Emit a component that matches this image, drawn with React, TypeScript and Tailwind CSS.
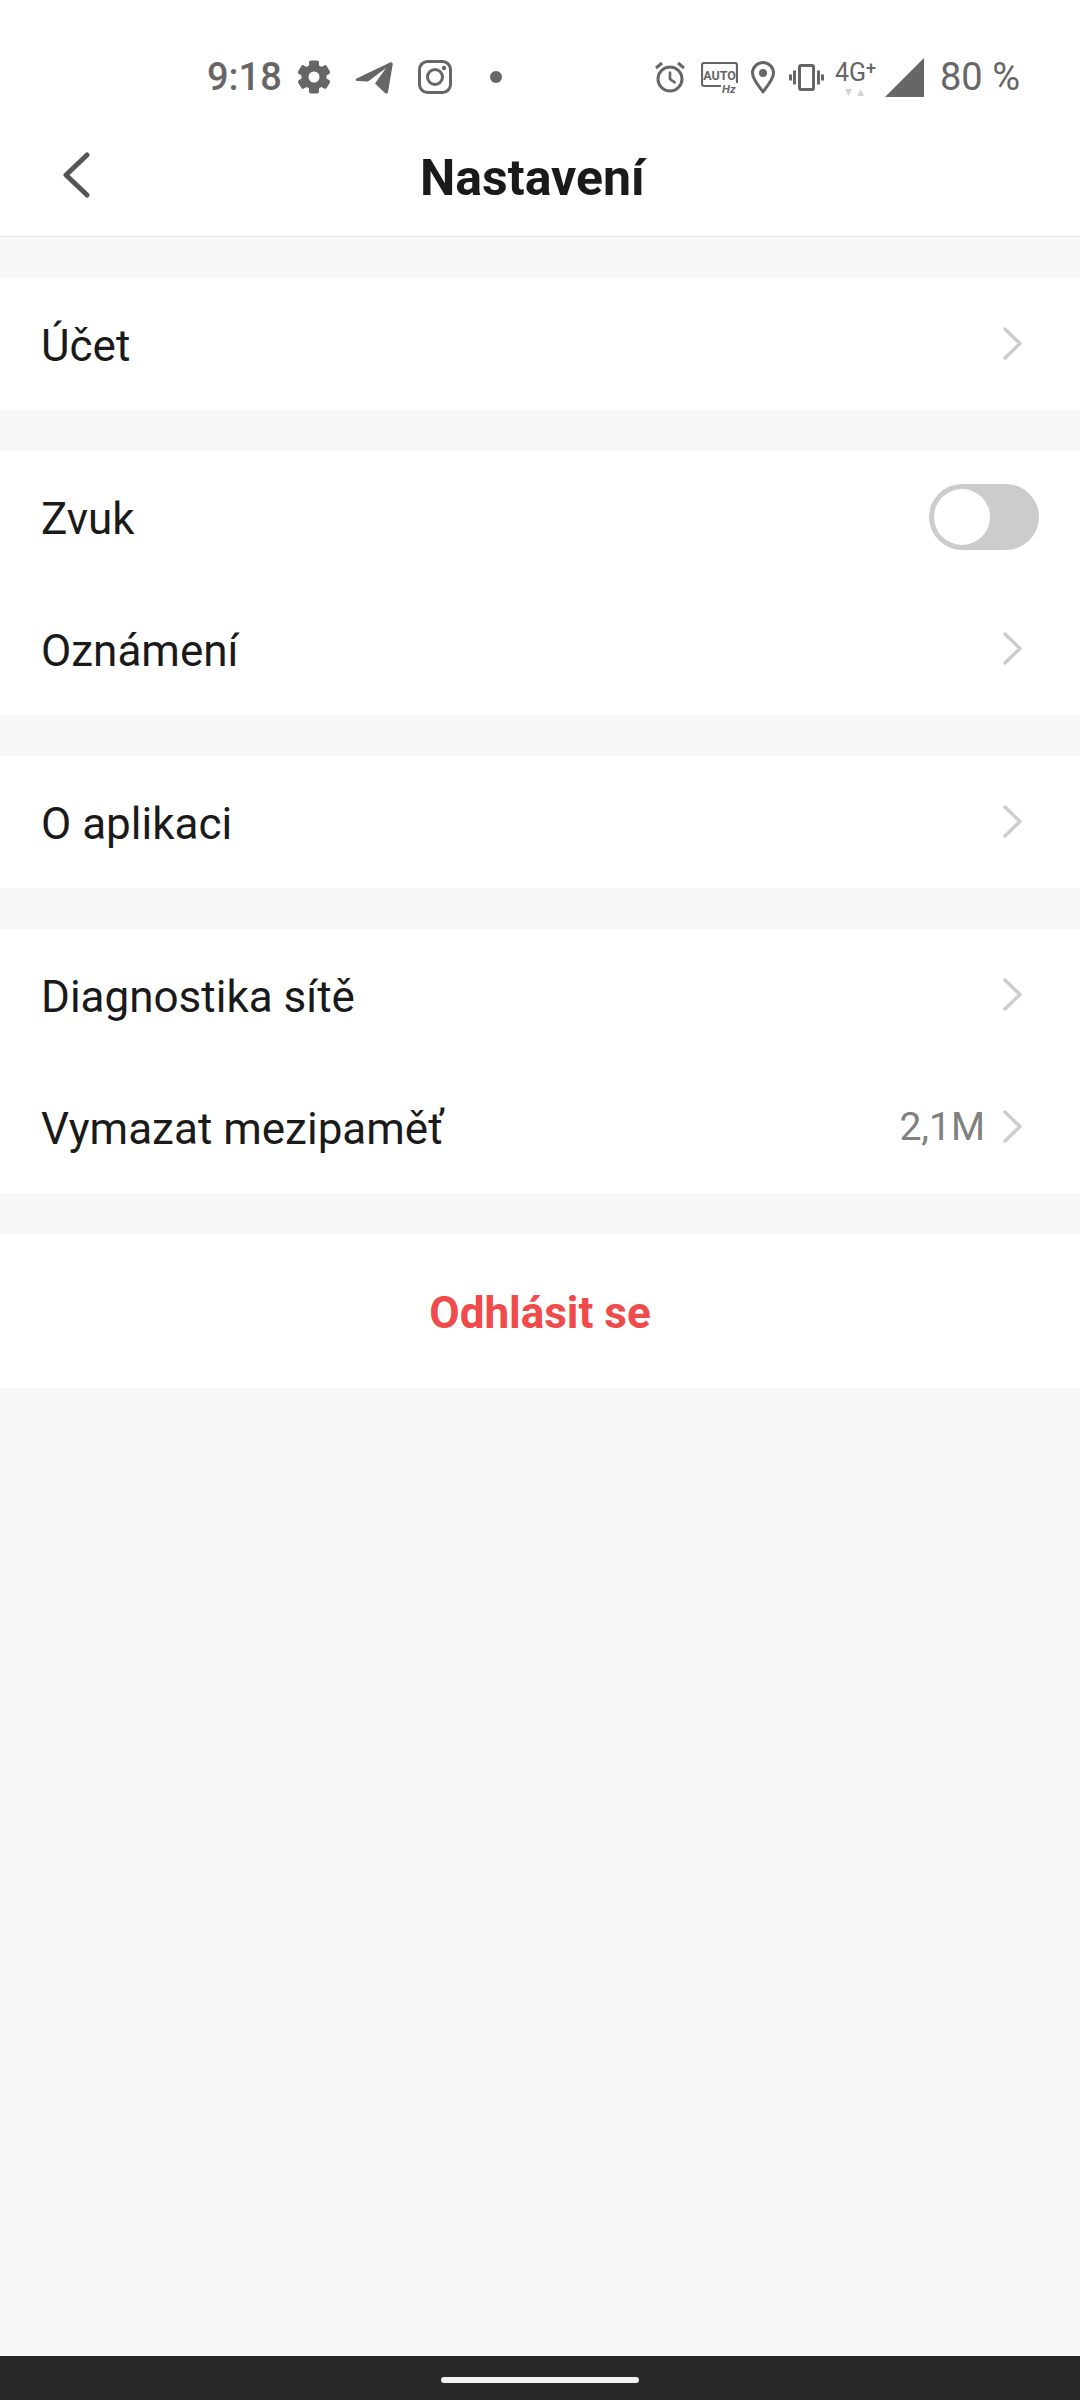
import React from 'react';

const Chevron = () => (
  <svg width="19" height="33" viewBox="0 0 19 33" fill="none" className="shrink-0 -translate-y-[1px]">
    <path d="M2 2l15 14.5L2 31" stroke="#cccccc" strokeWidth="3.4" strokeLinecap="round" strokeLinejoin="round" />
  </svg>
);

function Row({ label, value }: { label: string; value?: string }) {
  return (
    <div className="h-[132px] flex items-center justify-between pl-[41px] pr-[58px] bg-white">
      <span className="text-[44px] leading-[52px] pt-[4px] text-[#1a1a1a]">{label}</span>
      <div className="flex items-center gap-[18px]">
        {value && <span className="text-[39px] text-[#808080]">{value}</span>}
        <Chevron />
      </div>
    </div>
  );
}

function Gear() {
  return (
    <svg width="34" height="34" viewBox="0 0 34 34" className="shrink-0">
      {[0, 60, 120].map((a) => (
        <rect key={a} x="12" y="0.5" width="10" height="33" rx="2" fill="#666666" transform={`rotate(${a} 17 17)`} />
      ))}
      <circle cx="17" cy="17" r="12.5" fill="#666666" />
      <circle cx="17" cy="17" r="5.5" fill="#ffffff" />
    </svg>
  );
}

function StatusIcons() {
  return (
    <div className="h-[94px] pt-[57px] pl-[207px] pr-[60px] text-[#666666]">
      <div className="flex items-center h-[40px]">
        <span className="text-[38px] font-medium leading-[44px]">9:18</span>
        <div className="ml-[15px]"><Gear /></div>
        <svg width="38" height="33" viewBox="0 0 38 33" className="ml-[24px] shrink-0">
          <path d="M1.5 17.5L35 1.5c1.6-.7 3 .4 2.7 2L33 31c-.3 1.6-1.8 2-3 1L20 22.5 31 7 13 20.5 2 20c-1.600-.2-1.800-1.800-.5-2.500z" fill="#666666" />
        </svg>
        <svg width="34" height="34" viewBox="0 0 34 34" fill="none" className="ml-[25px] shrink-0">
          <rect x="1.500" y="1.500" width="31" height="31" rx="8" stroke="#666666" strokeWidth="3" />
          <circle cx="17" cy="17" r="7.500" stroke="#666666" strokeWidth="3" />
          <circle cx="26" cy="8" r="2.200" fill="#666666" />
        </svg>
        <div className="ml-[38px] w-[12px] h-[12px] rounded-full bg-[#666666] shrink-0" />
        <div className="flex-1" />
        <svg width="32" height="32" viewBox="0 0 32 32" fill="none" className="shrink-0">
          <circle cx="16" cy="18" r="12" stroke="#666666" strokeWidth="3" />
          <path d="M16 10.500V18l5.500 4" stroke="#666666" strokeWidth="2.600" />
          <path d="M2 7l6-5M30 7l-6-5" stroke="#666666" strokeWidth="3" />
        </svg>
        <svg width="37" height="31" viewBox="0 0 37 31" fill="none" className="ml-[15px] shrink-0">
          <path d="M20 24H3a2 2 0 0 1-2-2V3a2 2 0 0 1 2-2h31a2 2 0 0 1 2 2v18" stroke="#666666" strokeWidth="2.200" />
          <text x="18.500" y="18" textAnchor="middle" fontSize="12.500" fontWeight="700" fill="#666666" fontFamily="Roboto, sans-serif">AUTO</text>
          <text x="21" y="30.500" fontSize="11.500" fontWeight="700" fontStyle="italic" fill="#666666" fontFamily="Roboto, sans-serif">Hz</text>
        </svg>
        <svg width="24" height="33" viewBox="0 0 24 33" fill="none" className="ml-[13px] shrink-0">
          <path d="M12 31C7 24 1.500 18 1.500 12a10.500 10.500 0 0 1 21 0c0 6-5.500 12-10.500 19z" stroke="#666666" strokeWidth="3" strokeLinejoin="round" />
          <circle cx="12" cy="12" r="4" fill="#666666" />
        </svg>
        <svg width="35" height="27" viewBox="0 0 35 27" fill="none" className="ml-[14px] shrink-0">
          <rect x="10.500" y="1.500" width="14" height="24" rx="1.500" stroke="#666666" strokeWidth="3" />
          <path d="M5.500 6.500v14M1.500 10.500v6M29.500 6.500v14M33.500 10.500v6" stroke="#666666" strokeWidth="3" />
        </svg>
        <div className="ml-[11px] w-[41px] flex flex-col items-center shrink-0">
          <div className="w-full flex items-start h-[27px]">
            <span className="text-[25px] leading-[28px]">4G</span>
            <span className="text-[18px] leading-[18px] font-medium">+</span>
          </div>
          <svg width="20" height="7" viewBox="0 0 20 7" className="mt-[3px] -ml-[2px]">
            <path d="M0 0h7L3.500 7zM12 7h7L15.500 0z" fill="#d4d4d4" />
          </svg>
        </div>
        <svg width="39" height="39" viewBox="0 0 39 39" className="ml-[9px] shrink-0">
          <path d="M39 0v39H0z" fill="#666666" />
        </svg>
        <span className="ml-[16px] text-[38px] leading-[44px] whitespace-nowrap">80 %</span>
      </div>
    </div>
  );
}

export default function App() {
  return (
    <div className="w-[1080px] h-[2400px] flex flex-col bg-[#f8f8f8] overflow-hidden font-['Roboto',sans-serif]">
      <div className="bg-white h-[237px] border-b border-[#e6e6e6] flex flex-col">
        <StatusIcons />
        <div className="flex-1 flex items-center pl-[62px] pt-[26px]">
          <svg width="28" height="46" viewBox="0 0 28 46" fill="none" className="shrink-0 -mt-[6px]">
            <path d="M25 3L4 23l21 20" stroke="#555555" strokeWidth="5" strokeLinecap="round" strokeLinejoin="round" />
          </svg>
          <h1 className="ml-[330px] text-[50px] font-bold text-[#1a1a1a] leading-[56px]">Nastavení</h1>
        </div>
      </div>

      <div className="mt-[41px]"><Row label="Účet" /></div>

      <div className="mt-[41px]">
        <div className="h-[132px] flex items-center justify-between pl-[41px] pr-[41px] bg-white">
          <span className="text-[44px] leading-[52px] pt-[4px] text-[#1a1a1a]">Zvuk</span>
          <div className="w-[110px] h-[66px] rounded-full bg-[#cccccc] p-[5px]">
            <div className="w-[56px] h-[56px] rounded-full bg-white" />
          </div>
        </div>
        <Row label="Oznámení" />
      </div>

      <div className="mt-[41px]"><Row label="O aplikaci" /></div>

      <div className="mt-[41px]">
        <Row label="Diagnostika sítě" />
        <Row label="Vymazat mezipaměť" value="2,1M" />
      </div>

      <div className="mt-[41px] h-[154px] bg-white flex items-center justify-center">
        <span className="text-[44px] leading-[52px] pt-[3px] font-bold text-[#f04a4a]">Odhlásit se</span>
      </div>

      <div className="flex-1" />

      <div className="h-[44px] bg-[#292929] flex items-center justify-center pt-[4px]">
        <div className="w-[198px] h-[6px] rounded-full bg-[#f2f2f2]" />
      </div>
    </div>
  );
}
